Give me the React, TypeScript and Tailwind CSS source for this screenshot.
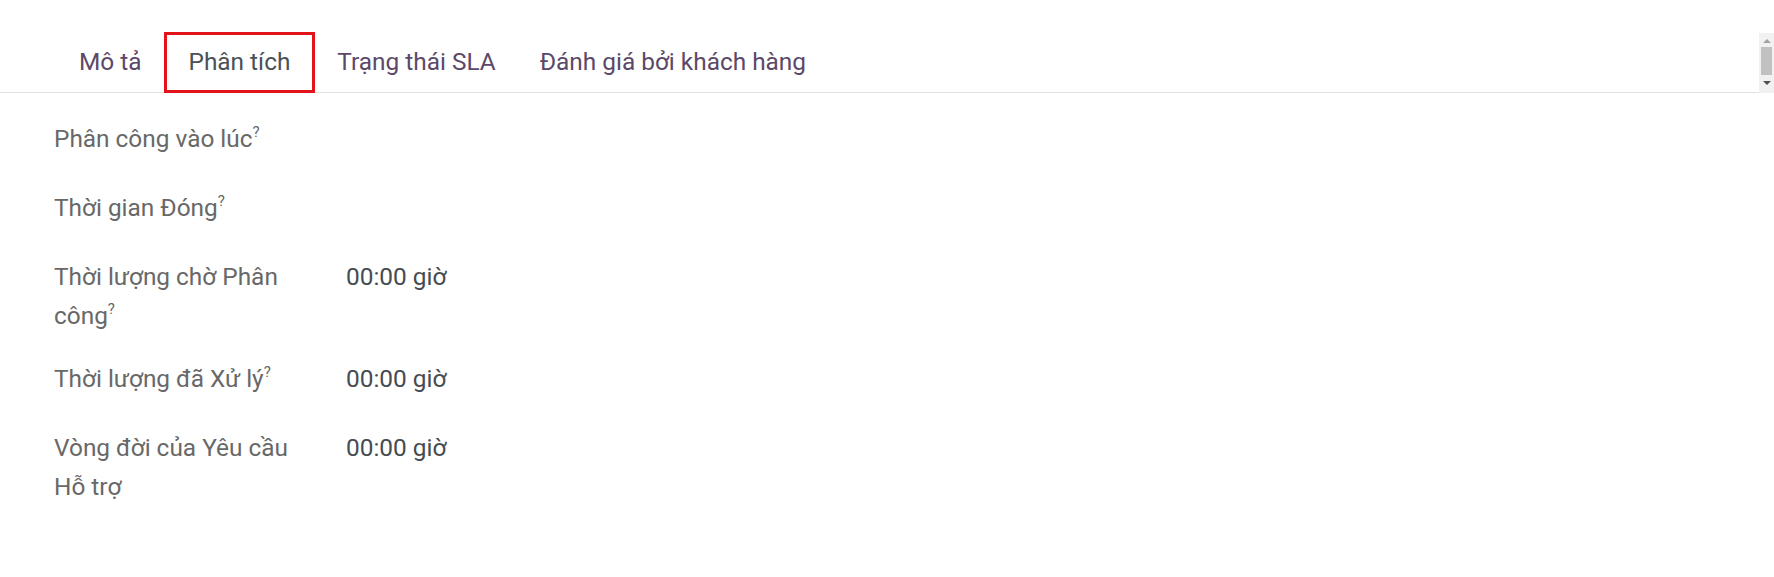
import React from "react";

const tabs = [
  { label: "Mô tả", active: false },
  { label: "Phân tích", active: true },
  { label: "Trạng thái SLA", active: false },
  { label: "Đánh giá bởi khách hàng", active: false },
];

const rows = [
  { label: "Phân công vào lúc", value: "", help: true },
  { label: "Thời gian Đóng", value: "", help: true },
  { label: "Thời lượng chờ Phân công", value: "00:00 giờ", help: true },
  { label: "Thời lượng đã Xử lý", value: "00:00 giờ", help: true },
  { label: "Vòng đời của Yêu cầu Hỗ trợ", value: "00:00 giờ", help: false },
];

const Scrollbar = () => (
  <div className="mt-[33px] flex h-[60px] w-[15px] flex-col items-center bg-[#f1f1f1]">
    <div className="mt-[6px] h-0 w-0 border-x-[4px] border-b-[4px] border-x-transparent border-b-[#a3a3a3]"></div>
    <div className="mt-[4px] h-[28px] w-[11px] bg-[#c1c1c1]"></div>
    <div className="mt-[6px] h-0 w-0 border-x-[4px] border-t-[4px] border-x-transparent border-t-[#505050]"></div>
  </div>
);

const App = () => {
  return (
    <div className="flex h-[577px] w-full bg-white font-['Roboto',sans-serif] text-[24.4px]">
      <div className="flex-1">
        <div className="flex h-[93px] items-end border-b border-[#dee2e6] pl-[57px]">
          {tabs.map((t) =>
            t.active ? (
              <div
                key={t.label}
                className="-mb-px flex h-[61px] items-center border-[3px] border-[#e3131b] px-[22px] text-[#4a5157]"
              >
                {t.label}
              </div>
            ) : (
              <div
                key={t.label}
                className="-mb-px flex h-[61px] items-center px-[22px] text-[#5c4868]"
              >
                {t.label}
              </div>
            )
          )}
        </div>
        <div className="pl-[54px] pt-[14px]">
          {rows.map((r) => (
            <div key={r.label} className="flex min-h-[69px] items-start py-[12px] leading-[39px]">
              <div className="w-[292px] pr-[42px] text-[#686868]">
                {r.label}
                {r.help && <sup className="-top-[10px] text-[15px] text-[#686868]">?</sup>}
              </div>
              <div className="text-[#464c52]">{r.value}</div>
            </div>
          ))}
        </div>
      </div>
      <Scrollbar />
    </div>
  );
};

export default App;
